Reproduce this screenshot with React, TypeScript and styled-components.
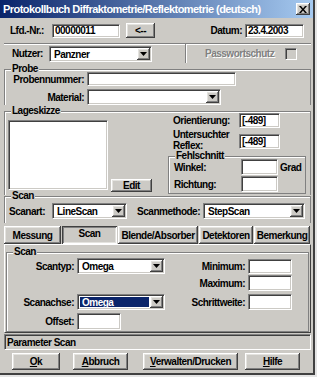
import React from "react";
import styled, { createGlobalStyle, css } from "styled-components";

const FACE = "#cccac5";
const FONT = `"Liberation Sans", Arial, sans-serif`;

const GlobalStyle = createGlobalStyle`
  html, body { margin: 0; padding: 0; background: #e4e4e4; }
  body { font-family: ${FONT}; font-size: 10px; letter-spacing: -0.5px; font-weight: bold; color: #000; }
  * { box-sizing: border-box; }
`;

const raised = css`
  background: ${FACE};
  box-shadow: inset -1px -1px #404040, inset 1px 1px #ffffff, inset -2px -2px #808080, inset 2px 2px #e4e3df;
`;

const pressed = css`
  background: ${FACE};
  box-shadow: inset 1px 1px #404040, inset -1px -1px #ffffff, inset 2px 2px #808080, inset -2px -2px #e4e3df;
`;

const sunken = css`
  border: 1px solid;
  border-color: #808080 #ffffff #ffffff #808080;
  box-shadow: inset 1px 1px #404040, inset -1px -1px ${FACE};
`;

const Window = styled.div`
  width: 315px;
  height: 375px;
  background: ${FACE};
  display: flex;
  flex-direction: column;
  border-right: 2px solid #404040;
  border-bottom: 2px solid #404040;
  overflow: hidden;
`;

const TitleBar = styled.div`
  height: 18px;
  flex-shrink: 0;
  display: flex;
  align-items: center;
  padding: 0 2px 0 3px;
  background: linear-gradient(to right, #0a246a, #a6caf0);
  color: #fff;
  font-size: 11px;
  letter-spacing: -0.55px;
`;

const TitleText = styled.span`
  flex: 1;
  white-space: nowrap;
`;

const CloseButton = styled.span`
  ${raised};
  width: 14px;
  height: 12px;
  display: flex;
  align-items: center;
  justify-content: center;
  margin-right: 1px;
`;

const Body = styled.div`
  flex: 1;
  display: flex;
  flex-direction: column;
  padding: 0 2px 0 4px;
`;

const TopRow = styled.div`
  height: 25px;
  display: flex;
  align-items: center;
  padding: 0 7px 0 6px;
`;

const Label = styled.span<{ $w?: number; $right?: boolean }>`
  flex-shrink: 0;
  white-space: nowrap;
  width: ${p => (p.$w ? `${p.$w}px` : "auto")};
  text-align: ${p => (p.$right ? "right" : "left")};
  padding-right: ${p => (p.$right ? "3px" : "0")};
  line-height: 11px;
`;

const Field = styled.div<{ $w: number; $h?: number }>`
  ${sunken};
  background: #fff;
  flex-shrink: 0;
  width: ${p => p.$w}px;
  height: ${p => p.$h ?? 15}px;
  padding-left: 2px;
  display: flex;
  align-items: center;
  white-space: nowrap;
`;

const Button = styled.button<{ $w: number; $h?: number; $ml?: number }>`
  ${raised};
  border: none;
  flex-shrink: 0;
  width: ${p => p.$w}px;
  height: ${p => p.$h ?? 17}px;
  margin-left: ${p => p.$ml ?? 0}px;
  padding: 0;
  font: inherit;
  letter-spacing: inherit;
  color: #000;
`;

const Combo = styled.div<{ $w: number }>`
  ${sunken};
  background: #fff;
  flex-shrink: 0;
  width: ${p => p.$w}px;
  height: 16px;
  display: flex;
  align-items: stretch;
  padding: 1px;
`;

const ComboText = styled.span<{ $sel?: boolean }>`
  flex: 1;
  margin: 1px;
  padding-left: 2px;
  line-height: 11px;
  white-space: nowrap;
  background: ${p => (p.$sel ? "#0a246a" : "transparent")};
  color: ${p => (p.$sel ? "#fff" : "#000")};
`;

const ComboArrow = styled.span`
  ${raised};
  width: 13px;
  display: flex;
  align-items: center;
  justify-content: center;
`;

const Strip = styled.div`
  height: 20px;
  display: flex;
  border-top: 1px solid #808080;
  box-shadow: inset 0 1px #fff;
`;

const StripCell = styled.div<{ $w?: number; $pl: number }>`
  display: flex;
  align-items: center;
  padding-left: ${p => p.$pl}px;
  ${p => (p.$w ? `width: ${p.$w}px; border-right: 1px solid #808080; box-shadow: 1px 0 #fff;` : "flex: 1;")}
`;

const Disabled = styled.span`
  color: #808080;
  text-shadow: 1px 1px #fff;
  width: 80px;
  white-space: nowrap;
`;

const CheckBox = styled.span`
  ${sunken};
  width: 12px;
  height: 12px;
  background: ${FACE};
`;

const Group = styled.div<{ $mt: number; $bottom?: boolean; $mx?: number }>`
  margin: ${p => p.$mt}px ${p => p.$mx ?? 0}px 0;
  border: 1px solid #808080;
  border-bottom: ${p => (p.$bottom ? "1px solid #808080" : "none")};
  box-shadow: inset 1px 1px #fff;
  padding: 0 1px ${p => (p.$bottom ? 1 : 0)}px;
  display: flex;
  flex-direction: column;
`;

const Legend = styled.div`
  width: fit-content;
  margin: -7px 0 -4px 5px;
  padding: 0 1px;
  line-height: 12px;
  background: ${FACE};
`;

const FieldRow = styled.div<{ $h: number; $mt: number; $pl?: number; $align?: string }>`
  display: flex;
  align-items: ${p => p.$align ?? "center"};
  height: ${p => p.$h}px;
  margin-top: ${p => p.$mt}px;
  padding-left: ${p => p.$pl ?? 0}px;
`;

const SketchLayout = styled.div`
  display: grid;
  grid-template-columns: 159px 1fr;
  padding-bottom: 1px;
`;

const SketchColumn = styled.div`
  display: flex;
  align-items: flex-start;
  padding-left: 2px;
`;

const SketchBox = styled.div`
  ${sunken};
  background: #fff;
  width: 100px;
  height: 70px;
  margin-top: 7px;
`;

const TwoLine = styled.span`
  width: 66px;
  line-height: 11px;
  flex-shrink: 0;
`;

const TabRow = styled.div`
  display: flex;
  gap: 1px;
  margin-top: 3px;
  height: 18px;
`;

const Tab = styled.div<{ $w: number; $active?: boolean }>`
  ${p => (p.$active ? pressed : raised)};
  width: ${p => p.$w}px;
  display: flex;
  justify-content: center;
  align-items: center;
  padding-bottom: ${p => (p.$active ? 4 : 0)}px;
  white-space: nowrap;
`;

const TabPanel = styled.div`
  border: 1px solid;
  border-color: #fff #404040 #404040 #fff;
  padding: 0 1px 0;
  display: flex;
  flex-direction: column;
`;

const ScanGrid = styled.div`
  display: grid;
  grid-template-columns: 69px 88px 1fr 44px 15px;
  grid-template-rows: 17px 19px 19px 17px;
  align-items: start;
  margin-top: 4px;
`;

const Cell = styled.div<{ $col: number; $row: number; $right?: boolean }>`
  grid-column: ${p => p.$col};
  grid-row: ${p => p.$row};
  height: 16px;
  display: flex;
  align-items: center;
  justify-content: ${p => (p.$right ? "flex-end" : "flex-start")};
  padding-right: ${p => (p.$right ? 3 : 0)}px;
  white-space: nowrap;
`;

const StatusBar = styled.div`
  ${sunken};
  height: 16px;
  margin-top: 1px;
  padding-left: 2px;
  display: flex;
  align-items: center;
`;

const ButtonBar = styled.div`
  display: flex;
  margin-top: 3px;
  padding-left: 8px;
`;

function Arrow() {
  return (
    <svg width="7" height="4" viewBox="0 0 7 4">
      <path d="M0 0h7L3.5 4z" fill="#000" />
    </svg>
  );
}

function Select({ w, value, sel }: { w: number; value: string; sel?: boolean }) {
  return (
    <Combo $w={w}>
      <ComboText $sel={sel}>{value}</ComboText>
      <ComboArrow>
        <Arrow />
      </ComboArrow>
    </Combo>
  );
}

export default function App() {
  return (
    <>
      <GlobalStyle />
      <Window>
        <TitleBar>
          <TitleText>Protokollbuch Diffraktometrie/Reflektometrie (deutsch)</TitleText>
          <CloseButton>
            <svg width="8" height="7" viewBox="0 0 8 7">
              <path d="M0 0h2l2 2.5L6 0h2L5 3.5 8 7H6L4 4.5 2 7H0l3-3.5z" fill="#000" />
            </svg>
          </CloseButton>
        </TitleBar>
        <Body>
          <TopRow>
            <Label $w={42}>Lfd.-Nr.:</Label>
            <Field $w={68} $h={14}>00000011</Field>
            <Button $w={29} $h={15} $ml={6}>&lt;--</Button>
            <Label style={{ flex: 1 }} $right>Datum:</Label>
            <Field $w={59} $h={14}>23.4.2003</Field>
          </TopRow>

          <Strip>
            <StripCell $w={182} $pl={8}>
              <Label $w={37}>Nutzer:</Label>
              <Select w={103} value="Panzner" />
            </StripCell>
            <StripCell $pl={19}>
              <Disabled>Passwortschutz</Disabled>
              <CheckBox />
            </StripCell>
          </Strip>

          <Group $mt={6}>
            <Legend>Probe</Legend>
            <FieldRow $h={14} $mt={1}>
              <Label $w={81} $right>Probennummer:</Label>
              <Field $w={149} $h={14} />
            </FieldRow>
            <FieldRow $h={16} $mt={3}>
              <Label $w={81} $right>Material:</Label>
              <Select w={134} value="" />
            </FieldRow>
          </Group>

          <Group $mt={6}>
            <Legend>Lageskizze</Legend>
            <SketchLayout>
              <SketchColumn>
                <SketchBox />
                <Button $w={41} $h={13} $ml={3} style={{ marginTop: 66 }}>Edit</Button>
              </SketchColumn>
              <div>
                <FieldRow $h={15} $mt={0} $pl={8}>
                  <Label $w={66}>Orientierung:</Label>
                  <Field $w={41}>[-489]</Field>
                </FieldRow>
                <FieldRow $h={22} $mt={1} $pl={8} $align="flex-end">
                  <TwoLine>
                    Untersuchter
                    <br />
                    Reflex:
                  </TwoLine>
                  <Field $w={41} style={{ marginBottom: 2 }}>[-489]</Field>
                </FieldRow>
                <Group $mt={5} $bottom $mx={3}>
                  <Legend>Fehlschnitt</Legend>
                  <FieldRow $h={16} $mt={1} $pl={4}>
                    <Label $w={67}>Winkel:</Label>
                    <Field $w={37} $h={16} />
                    <Label style={{ marginLeft: 2 }}>Grad</Label>
                  </FieldRow>
                  <FieldRow $h={16} $mt={1} $pl={4}>
                    <Label $w={67}>Richtung:</Label>
                    <Field $w={37} $h={16} />
                  </FieldRow>
                </Group>
              </div>
            </SketchLayout>
          </Group>

          <Group $mt={1}>
            <Legend>Scan</Legend>
            <FieldRow $h={16} $mt={5} $pl={3} style={{ marginBottom: 4 }}>
              <Label $w={43}>Scanart:</Label>
              <Select w={75} value="LineScan" />
              <Label $w={76} $right>Scanmethode:</Label>
              <Select w={102} value="StepScan" />
            </FieldRow>
          </Group>

          <TabRow>
            <Tab $w={57}>Messung</Tab>
            <Tab $w={55} $active>Scan</Tab>
            <Tab $w={80}>Blende/Absorber</Tab>
            <Tab $w={54}>Detektoren</Tab>
            <Tab $w={56}>Bemerkung</Tab>
          </TabRow>

          <TabPanel>
            <Group $mt={7} $bottom>
              <Legend>Scan</Legend>
              <ScanGrid>
                <Cell $col={1} $row={1} $right>Scantyp:</Cell>
                <Cell $col={2} $row={1}><Select w={88} value="Omega" /></Cell>
                <Cell $col={3} $row={1} $right>Minimum:</Cell>
                <Cell $col={4} $row={1}><Field $w={44} /></Cell>
                <Cell $col={3} $row={2} $right>Maximum:</Cell>
                <Cell $col={4} $row={2}><Field $w={44} $h={16} /></Cell>
                <Cell $col={1} $row={3} $right>Scanachse:</Cell>
                <Cell $col={2} $row={3}><Select w={88} value="Omega" sel /></Cell>
                <Cell $col={3} $row={3} $right>Schrittweite:</Cell>
                <Cell $col={4} $row={3}><Field $w={44} $h={16} /></Cell>
                <Cell $col={1} $row={4} $right>Offset:</Cell>
                <Cell $col={2} $row={4}><Field $w={44} $h={17} /></Cell>
              </ScanGrid>
            </Group>
          </TabPanel>

          <StatusBar>Parameter Scan</StatusBar>

          <ButtonBar>
            <Button $w={48}><u>O</u>k</Button>
            <Button $w={55} $ml={13}><u>A</u>bbruch</Button>
            <Button $w={95} $ml={15}><u>V</u>erwalten/Drucken</Button>
            <Button $w={55} $ml={7}><u>H</u>ilfe</Button>
          </ButtonBar>
        </Body>
      </Window>
    </>
  );
}
